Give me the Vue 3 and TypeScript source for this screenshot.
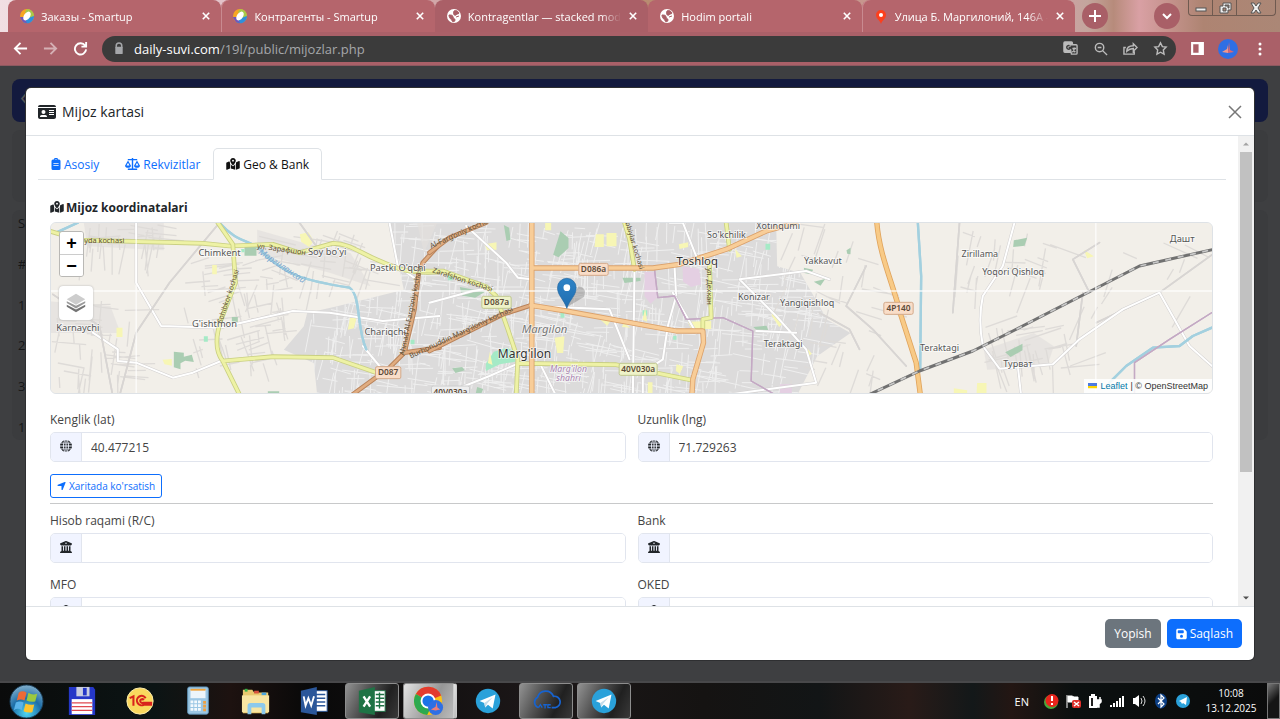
<script setup lang="ts">
import { ref } from 'vue'

interface BrowserTab { title: string; icon: 'smartup' | 'globe' | 'pin'; active?: boolean }
interface Shape { box: string; d: string }
interface Road { d: string; kind: string }
interface MapLabel { t: string; x: number; y: number; size: number; kind?: string; rot?: number }
interface Field { id: string; label: string; icon: string }

const browserTabs: BrowserTab[] = [
  { title: 'Заказы - Smartup', icon: 'smartup' },
  { title: 'Контрагенты - Smartup', icon: 'smartup' },
  { title: 'Kontragentlar — stacked modal', icon: 'globe', active: true },
  { title: 'Hodim portali', icon: 'globe' },
  { title: 'Улица Б. Маргилоний, 146А — Яндекс', icon: 'pin' },
]

const shapes: Record<string, Shape> = {
  card: { box: '0 0 576 512', d: 'M0 96l576 0c0-35.3-28.7-64-64-64L64 32C28.7 32 0 60.7 0 96zm0 32L0 416c0 35.3 28.7 64 64 64l448 0c35.3 0 64-28.7 64-64l0-288L0 128zM64 405.3c0-29.5 23.9-53.3 53.3-53.3l117.3 0c29.5 0 53.3 23.9 53.3 53.3c0 5.9-4.8 10.7-10.7 10.7L74.7 416c-5.9 0-10.7-4.8-10.7-10.7zM176 192a64 64 0 1 1 0 128 64 64 0 1 1 0-128zM352 192h160v32H352zM352 256h160v32H352zM352 320h160v32H352z' },
  clipboard: { box: '0 0 384 512', d: 'M112 64a80 80 0 0 1 160 0h48a64 64 0 0 1 64 64v320a64 64 0 0 1-64 64H64a64 64 0 0 1-64-64V128a64 64 0 0 1 64-64zM192 40a24 24 0 1 0 0 48 24 24 0 1 0 0-48zM80 220v36h224v-36zM80 310v36h224v-36z' },
  scale: { box: '0 0 640 512', d: 'M290 0h60v40h170v56H350v352h170v64H120v-64h170V96H120V40h170zM128 110L256 330c0 56-58 86-128 86S0 386 0 330zM128 205L66 320h124zM512 110l128 220c0 56-58 86-128 86s-128-30-128-86zM512 205l-62 115h124z' },
  map: { box: '0 0 576 512', d: 'M408 120c0 54.6-73.1 151.9-105.2 192c-7.7 9.6-22 9.6-29.6 0C241.1 271.9 168 174.6 168 120C168 53.7 221.7 0 288 0s120 53.7 120 120zm8 80.4c3.5-6.9 6.7-13.8 9.6-20.6c.5-1.2 1-2.5 1.5-3.7l116-46.4C558.9 123.4 576 135 576 152l0 270.8c0 9.8-6 18.6-15.1 22.3L416 503l0-302.6zM137.6 138.3c2.4 14.1 7.2 28.3 12.8 41.5c2.9 6.8 6.1 13.7 9.6 20.6l0 251.4L32.9 502.7C17.1 509 0 497.4 0 480.4L0 209.6c0-9.8 6-18.6 15.1-22.3l122.6-49zM327.8 332c13.9-17.4 35.7-45.7 56.2-77l0 249.3L192 449.4 192 255c20.5 31.3 42.3 59.6 56.2 77c20.5 25.6 59.1 25.6 79.6 0zM288 152a40 40 0 1 0 0-80 40 40 0 1 0 0 80z' },
  globe: { box: '0 0 512 512', d: 'M0 236a256 256 0 0 1 22-84h118a700 700 0 0 0-8 84zM0 276h132a700 700 0 0 0 8 84H22A256 256 0 0 1 0 276zM46 116A256 256 0 0 1 186 10a290 290 0 0 0-38 106zM46 396h102a290 290 0 0 0 38 106A256 256 0 0 1 46 396zM236 0v116h-52C196 50 214 8 236 0zM276 0v116h52C316 50 298 8 276 0zM180 152h56v84h-64a640 640 0 0 1 8-84zM276 152h56a640 640 0 0 1 8 84h-64zM172 276h64v84h-56a640 640 0 0 1-8-84zM276 276h64a640 640 0 0 1-8 84h-56zM184 396h52v116c-22-8-40-50-52-116zM276 396h52c-12 66-30 108-52 116zM326 10a256 256 0 0 1 140 106H364A290 290 0 0 0 326 10zM490 152a256 256 0 0 1 22 84H380a700 700 0 0 0-8-84zM512 276a256 256 0 0 1-22 84H372a700 700 0 0 0 8-84zM466 396a256 256 0 0 1-140 106 290 290 0 0 0 38-106z' },
  bank: { box: '0 0 512 512', d: 'M243.4 2.6l-224 96c-14 6-21.8 21-18.7 35.8S16.8 160 32 160l0 8c0 13.3 10.7 24 24 24l400 0c13.3 0 24-10.7 24-24l0-8c15.2 0 28.3-10.7 31.3-25.6s-4.8-29.9-18.7-35.8l-224-96c-8-3.4-17.2-3.4-25.2 0zM128 224l-64 0 0 196.3c-.6 .3-1.2 .7-1.8 1.1l-48 32c-11.7 7.8-17 22.4-12.9 35.9S17.9 512 32 512l448 0c14.1 0 26.5-9.2 30.6-22.7s-1.1-28.1-12.9-35.9l-48-32c-.6-.4-1.2-.7-1.8-1.1L448 224l-64 0 0 192-40 0 0-192-64 0 0 192-48 0 0-192-64 0 0 192-40 0 0-192zM256 64a32 32 0 1 1 0 64 32 32 0 1 1 0-64z' },
  arrow: { box: '0 0 448 512', d: 'M429.6 92.1c4.9-11.9 2.1-25.6-7-34.7s-22.8-11.9-34.7-7l-352 144c-14.2 5.8-22.2 20.8-19.3 35.8s16.1 25.8 31.4 25.8l176 0 0 176c0 15.3 10.8 28.4 25.8 31.4s30-5.1 35.8-19.3l144-352z' },
  save: { box: '0 0 448 512', d: 'M64 32C28.7 32 0 60.7 0 96L0 416c0 35.3 28.7 64 64 64l320 0c35.3 0 64-28.7 64-64l0-242.7c0-17-6.7-33.3-18.7-45.3L352 50.7C340 38.7 323.7 32 306.7 32L64 32zm0 96c0-17.7 14.3-32 32-32l192 0c17.7 0 32 14.3 32 32l0 64c0 17.7-14.3 32-32 32L96 224c-17.7 0-32-14.3-32-32l0-64zM224 288a64 64 0 1 1 0 128 64 64 0 1 1 0-128z' },
}

const cardTabs = [
  { name: 'Asosiy', icon: 'clipboard' },
  { name: 'Rekvizitlar', icon: 'scale' },
  { name: 'Geo & Bank', icon: 'map' },
]
const currentTab = ref('Geo & Bank')

const values = ref<Record<string, string>>({ lat: '40.477215', lng: '71.729263', account: '', bank: '', mfo: '', oked: '' })
const geoFields: Field[] = [
  { id: 'lat', label: 'Kenglik (lat)', icon: 'globe' },
  { id: 'lng', label: 'Uzunlik (lng)', icon: 'globe' },
]
const bankFields: Field[] = [
  { id: 'account', label: 'Hisob raqami (R/C)', icon: 'bank' },
  { id: 'bank', label: 'Bank', icon: 'bank' },
  { id: 'mfo', label: 'MFO', icon: 'bank' },
  { id: 'oked', label: 'OKED', icon: 'bank' },
]

const pageRows = ['Sa', '#', '1', '2', '3', '1']

/* Side streets of the city: short blocks on a slightly turned grid. */
let seed = 41
function rand(): number {
  seed = (seed * 16807) % 2147483647
  return seed / 2147483647
}
function streets(count: number, x0: number, x1: number, y0: number, y1: number, turn: number): string {
  let d = ''
  for (let i = 0; i < count; i++) {
    const x = Math.round(x0 + rand() * (x1 - x0))
    const y = Math.round(y0 + rand() * (y1 - y0))
    const angle = turn + (rand() - 0.5) * 0.35 + (rand() > 0.5 ? Math.PI / 2 : 0)
    const len = 30 + rand() * 90
    d += `M${x} ${y}l${Math.round(Math.cos(angle) * len)} ${Math.round(Math.sin(angle) * len)}`
  }
  return d
}
const cityStreets = streets(900, 780, 2340, -20, 516, 0.12)
const villageStreets =
  streets(70, 400, 700, 100, 440, -0.2) + streets(40, 0, 240, 230, 470, 0.05) + streets(45, 620, 960, 20, 190, 0.25) +
  streets(34, 90, 330, 0, 80, 0.05) + streets(26, 2720, 3000, 20, 200, 0.2) + streets(34, 2790, 3060, 300, 440, -0.2) +
  streets(40, 2200, 2480, 0, 480, 0.3) + streets(10, 3100, 3460, 20, 260, 0.4)

const westRoads: Road[] = [
  { d: 'M290 20V200L365 330L540 335L760 285L870 290L1030 315L1200 300', kind: 'white' },
  { d: 'M160 350L235 400L235 435L290 440L400 485L460 470L545 435', kind: 'white' },
  { d: 'M1050 20L1075 150L1130 190M970 390L1020 450', kind: 'white' },
  { d: 'M540 20L390 200L290 350L240 540M40 235L180 330L220 540M780 20L830 90', kind: 'lane' },
  { d: 'M540 20C600 90 640 65 680 120C740 170 770 190 930 215C965 240 950 330 980 400', kind: 'river' },
  { d: 'M50 50L115 20', kind: 'river' },
  { d: 'M30 45L120 72L490 82L570 90L700 85L780 110L880 82C930 82 960 110 1010 130C1060 150 1090 175 1200 168', kind: 'yellow' },
  { d: 'M535 20L580 85L588 200L545 310C525 370 530 410 550 435L602 540M550 435L700 422L880 425L1040 480', kind: 'yellow' },
  { d: 'M1200 85L1150 140L1138 170L1125 280L1095 410L1050 455L940 535M1095 410L1200 395', kind: 'brown' },
]
const cityRoads: Road[] = [
  { d: 'M110 30L230 140L265 185L305 190M0 260L130 225L190 215M305 270L540 280L600 430', kind: 'white' },
  { d: 'M615 160L610 540M720 20L760 20L800 120M735 150L740 240L715 330L700 430L640 470L640 540', kind: 'white' },
  { d: 'M865 540L1160 500L1130 400L1040 300L930 190L1130 165L1200 190M980 345L1100 350', kind: 'white' },
  { d: 'M730 230L800 350M330 440L380 540M30 540L180 480L260 445', kind: 'white' },
  { d: 'M620 160L675 160L685 245L735 240L770 310L880 305L970 345L965 495L1035 535', kind: 'border' },
  { d: 'M585 20L600 70L615 160M890 20L900 100M840 140L845 305L820 310L820 350', kind: 'yellow' },
  { d: 'M-50 165L40 165L170 212L200 240L235 340L265 430L260 540M265 442L560 446L785 492', kind: 'yellow' },
  { d: 'M0 110L60 65L170 20M0 405L110 350L220 295L305 268', kind: 'brown' },
  { d: 'M307 20V540M310 156H670L750 145L890 100L1010 45L1100 20M305 268L410 285L740 345H820L822 380L790 490L787 540', kind: 'orange' },
]
const eastRoads: Road[] = [
  { d: 'M140 150L80 270L160 340L260 450M0 290L90 340L120 400M400 290L420 20M790 230L770 390M840 80L760 130L810 230M1200 100L1020 230L830 320', kind: 'lane' },
  { d: 'M585 20L550 150L490 240Q475 310 490 390L540 458L700 445L780 370L910 280L1020 230L1110 390L1200 470M595 450L605 540', kind: 'white' },
  { d: 'M295 20L305 180L302 460', kind: 'river' },
  { d: 'M870 500L920 450L1000 395L1080 390L1120 360L1200 325', kind: 'river' },
  { d: 'M945 540V440L1050 370L1200 275', kind: 'border' },
  { d: 'M172 20C180 120 220 200 245 300L290 440L303 540', kind: 'trunk' },
  { d: 'M140 540L300 465L460 405L580 345L960 150L1200 96', kind: 'rail' },
]
const roadGroups = [
  { x: -33, roads: westRoads },
  { x: 1137, roads: cityRoads },
  { x: 2307, roads: eastRoads },
]

const labels: MapLabel[] = [
  { t: 'Chimkent', x: 507, y: 100, size: 28 },
  { t: "Soy bo'yi", x: 830, y: 95, size: 28 },
  { t: "Pastki O'qchi", x: 1042, y: 144, size: 28 },
  { t: 'Karnaychi', x: 82, y: 325, size: 28 },
  { t: "G'ishtmon", x: 492, y: 311, size: 28 },
  { t: 'Chariqchi', x: 1004, y: 337, size: 28 },
  { t: "So'kchilik", x: 2028, y: 46, size: 27 },
  { t: 'Xotinqumi', x: 2183, y: 19, size: 27 },
  { t: 'Toshloq', x: 1940, y: 126, size: 34, kind: 'town' },
  { t: 'Yakkavut', x: 2317, y: 124, size: 27 },
  { t: 'Konizar', x: 2110, y: 230, size: 27 },
  { t: 'Yangiqishloq', x: 2270, y: 250, size: 27 },
  { t: 'Teraktagi', x: 2198, y: 373, size: 27 },
  { t: 'Margilon', x: 1482, y: 329, size: 34, kind: 'district' },
  { t: "Marg'ilon", x: 1422, y: 405, size: 36, kind: 'town' },
  { t: "Marg'ilon", x: 1554, y: 446, size: 26, kind: 'admin' },
  { t: 'shahri', x: 1554, y: 475, size: 26, kind: 'admin' },
  { t: 'Zirillama', x: 2788, y: 103, size: 27 },
  { t: 'Yoqori Qishloq', x: 2888, y: 157, size: 27 },
  { t: 'Дашт', x: 3395, y: 57, size: 28 },
  { t: 'Teraktagi', x: 2667, y: 383, size: 27 },
  { t: 'Турват', x: 2902, y: 431, size: 27 },
  { t: 'Joyda kochasi', x: 152, y: 60, size: 22, kind: 'street' },
  { t: 'ул. Зарафшон', x: 692, y: 86, size: 22, kind: 'street', rot: 8 },
  { t: 'Sohibkor kochasi', x: 540, y: 222, size: 21, kind: 'street', rot: -72 },
  { t: 'Маргилансай', x: 690, y: 136, size: 26, kind: 'water', rot: 34 },
  { t: 'Ahmad Al-Farg‘oniy kochasi', x: 1087, y: 266, size: 21, kind: 'street', rot: -79 },
  { t: 'Al-Farg‘oniy kochasi', x: 1235, y: 35, size: 22, kind: 'street', rot: -24 },
  { t: 'Zarafshon kochasi', x: 1234, y: 177, size: 22, kind: 'street', rot: 18 },
  { t: 'Burhonuddin Marg‘iloniy kochasi', x: 1235, y: 335, size: 22, kind: 'street', rot: -25 },
  { t: 'Murabbiylar kochasi', x: 1738, y: 45, size: 21, kind: 'street', rot: 73 },
  { t: 'ул. Дехкан', x: 1969, y: 190, size: 22, kind: 'street', rot: 90 },
]
const shields = [
  { t: 'D087', x: 1013, y: 448, tone: 'warm' },
  { t: 'D086a', x: 1629, y: 138, tone: 'warm' },
  { t: 'D087a', x: 1338, y: 237, tone: 'lime' },
  { t: '40V030a', x: 1763, y: 438, tone: 'lime' },
  { t: '40V030a', x: 1200, y: 506, tone: 'plain' },
  { t: '4P140', x: 2544, y: 255, tone: 'warm' },
]
const parks = 'M582 68h36v30h-36zM370 386l30 3 0 12 24-6 6 22-26-4-14 8v18l-20-6zM544 282h18v18h-18zM652 505h34v12h-34zM1360 6l16 8 4 36-12 4zM1530 25l24 20v30l-30 28-16-8zM1228 192l76 14-30 18-40-6zM1716 164h54v10l-48 6zM2108 312l40-4 8 20-34-4zM2260 134l28 6-8 14-18-4zM2290 176l34-8-14 20zM2388 82l12-8v20l-10-2zM2890 52l40-8-8 24-34 4zM2864 388l52-26v20l-36 20zM1205 436l30-4 8 10-28 8zM1280 492l18 6-8 20-14-8z'
const mints = 'M1330 386l40-12 24 12v30l-46 8-42 20v-22zM460 340h12v16h-12zM1776 262h14v16h-14zM2145 62h14v18h-14zM572 78h10v10h-10zM1530 260h12v24h-12zM1192 150h14v22h-14zM1080 350h12v14h-12zM1868 338h10v12h-10z'
const yards = 'M485 126h14v28h-14zM748 34l26-6 16 26-14 18-24-16zM898 284l20 2-8 30-18 4zM198 314h18v28h-18zM336 410l28-2v20l-22-4zM1636 34h24v38h-28zM1668 30h30v40h-30zM1302 64l36-6v22l-28 2zM1484 0h18v22h-18zM1512 344l30-4-4 50h-18zM1784 256l6 40-14-6zM1318 386l8 40-14-6zM1885 64l28-6v14l-26 6zM2054 78l20 22-16 4zM1650 290l30 4-10 14zM1720 300l20 14-26-2zM1912 296l70-2v24h-60zM2164 266l30 38-8 8-22-34zM1792 478h14v34h-14zM1878 424l20 6-10 22-12-8zM2270 376l14 16-10 8zM2780 480h28v32h-30zM2710 496l40 6v10h-40zM3100 80l30 20-20 6z'
const pinks = 'M1782 146h32l8 76-22 20-18-22zM1896 130l50 8 6 46-30 8-24-16zM2188 484h36v32h-36z'

const tray = ['alert', 'flag', 'power', 'signal', 'sound', 'bluetooth', 'telegram']
const apps = ['start', 'floppy', 'onec', 'calc', 'folder', 'word', 'excel', 'chrome', 'telegram', 'cloud', 'telegram']
const running = [6, 7, 9, 10]
</script>

<template>
  <div class="screen">
    <header class="strip">
      <div class="tabs">
        <div v-for="tab in browserTabs" :key="tab.title" class="tab" :class="{ active: tab.active }">
          <svg v-if="tab.icon === 'smartup'" class="fav" viewBox="0 0 16 16">
            <circle cx="8" cy="8" r="7" fill="#f6a623" /><path d="M8 1a7 7 0 0 1 7 7l-3 4-6-8z" fill="#a7c94a" />
            <path d="M15 8a7 7 0 0 1-11 6l5-4z" fill="#2f8fdc" /><path d="M1 9a7 7 0 0 0 7 6l-3-6z" fill="#7357b8" />
            <ellipse cx="8" cy="8" rx="3" ry="5" transform="rotate(35 8 8)" fill="#fff" />
          </svg>
          <svg v-else-if="tab.icon === 'globe'" class="fav" viewBox="0 0 16 16">
            <circle cx="8" cy="8" r="7" fill="#fff" />
            <path d="M3 7c2 0 4 0 4 2s2 1 2 3-2 2-3 1c0-2-3-2-3-6zM8 3c2-1 4 0 5 2-1 2-2 0-3 2-2 1-3-1-2-4zM10 9l3-1" fill="#a85e66" stroke="#a85e66" />
          </svg>
          <svg v-else class="fav" viewBox="0 0 16 16">
            <path d="M8 2a5 5 0 0 1 5 5c0 4-4 5-5 9-1-4-5-5-5-9a5 5 0 0 1 5-5z" fill="#fc3f1d" /><circle cx="8" cy="7" r="2" fill="#fff" />
          </svg>
          <span class="title">{{ tab.title }}</span>
          <button class="x" type="button" aria-label="Close tab">
            <svg viewBox="0 0 10 10"><path d="M1 1l8 8M9 1l-8 8" /></svg>
          </button>
        </div>
      </div>
      <button class="round" type="button" aria-label="New tab"><svg viewBox="0 0 14 14"><path d="M7 1v12M1 7h12" /></svg></button>
      <div class="gap"></div>
      <button class="round" type="button" aria-label="Search tabs"><svg viewBox="0 0 14 14"><path d="M3 5l4 4 4-4" /></svg></button>
      <div class="winbtns">
        <button type="button" aria-label="Minimize"><svg viewBox="0 0 14 12"><rect x="2" y="6" width="10" height="3" /></svg></button>
        <button type="button" aria-label="Restore"><svg viewBox="0 0 14 12"><path d="M5 1h8v7h-3v3H2V4h3zM5 6v3h3V6zM7 3v1h3v2h1V3z" fill-rule="evenodd" /></svg></button>
        <button class="wide" type="button" aria-label="Close"><svg viewBox="0 0 14 12"><path d="M2 1h3l2 3 2-3h3L9 6l3 5H9L7 8l-2 3H2l3-5z" /></svg></button>
      </div>
    </header>

    <div class="toolbar">
      <button class="nav" type="button" aria-label="Back"><svg viewBox="0 0 16 16"><path d="M15 8H2M8 2L2 8l6 6" /></svg></button>
      <button class="nav dim" type="button" aria-label="Forward"><svg viewBox="0 0 16 16"><path d="M1 8h13M8 2l6 6-6 6" /></svg></button>
      <button class="nav" type="button" aria-label="Reload"><svg viewBox="0 0 16 16"><path d="M13 5a6 6 0 1 0 1 4M14 1v5H9" /></svg></button>
      <div class="address">
        <svg class="lock" viewBox="0 0 10 14"><path d="M2 6V4a3 3 0 0 1 6 0v2" fill="none" stroke="#a5a7aa" stroke-width="1.6" /><rect x="1" y="5" width="8" height="8" rx="1" fill="#a5a7aa" /></svg>
        <span class="url" role="textbox" aria-label="Address" contenteditable="true"><b>daily-suvi.com</b>/19l/public/mijozlar.php</span>
        <button type="button" aria-label="Translate"><svg viewBox="0 0 16 16"><rect x="1" y="1" width="9" height="11" rx="1" fill="#bbb" /><path d="M7 4h7a1 1 0 0 1 1 1v8a1 1 0 0 1-1 1H9z" fill="#3b3b3b" stroke="#bbb" /><path d="M10 8h4M12 7v1c0 2-1 3-2 4M11 9l2 3" stroke="#bbb" fill="none" /><path d="M7 5a2 2 0 1 0 1 2H6" stroke="#3b3b3b" fill="none" /></svg></button>
        <button type="button" aria-label="Zoom"><svg viewBox="0 0 16 16"><circle cx="7" cy="7" r="4.5" /><path d="M10 10l5 5M5 7h4" /></svg></button>
        <button type="button" aria-label="Share"><svg viewBox="0 0 16 16"><path d="M3 7H1v7h11v-3M4 11c0-4 3-6 7-6V3l4 4-4 4V8c-3 0-5 1-7 3z" /></svg></button>
        <button type="button" aria-label="Bookmark"><svg viewBox="0 0 16 16"><path d="M8 2l2 4 4 .5-3 3 .8 4.500L8 12l-3.800 2L5 9.500l-3-3L6 6z" /></svg></button>
      </div>
      <button class="side" type="button" aria-label="Side panel"><svg viewBox="0 0 14 14"><path d="M1 1h12v12H1zM3 3v8h5V3z" fill="#fff" fill-rule="evenodd" /></svg></button>
      <button class="avatar" type="button" aria-label="Profile"><svg viewBox="0 0 20 20"><circle cx="10" cy="10" r="10" fill="#2f6fe4" /><path d="M11 3l1 8 4 2-6 1z" fill="#e0666f" /><path d="M10 6v8l-6-1 5-3z" fill="#f4978a" /></svg></button>
      <button class="dots" type="button" aria-label="Menu"><svg viewBox="0 0 4 16"><circle cx="2" cy="3" r="1.500" /><circle cx="2" cy="8" r="1.500" /><circle cx="2" cy="13" r="1.500" /></svg></button>
    </div>

    <main class="page">
      <div class="sitebar"><span>‹</span></div>
      <div class="behind">
        <div class="block"></div>
        <div class="block list">
          <span v-for="(r, i) in pageRows" :key="i">{{ r }}</span>
        </div>
      </div>

      <div class="overlay">
        <section class="modal" role="dialog" aria-labelledby="modal-title">
          <header class="mhead">
            <svg class="ic big" :viewBox="shapes.card.box"><path :d="shapes.card.d" fill-rule="evenodd" /></svg>
            <h1 id="modal-title">Mijoz kartasi</h1>
            <button class="close" type="button" aria-label="Yopish"><svg viewBox="0 0 14 14"><path d="M1 1l12 12M13 1L1 13" /></svg></button>
          </header>

          <div class="mbody">
            <div class="content">
              <div class="navtabs" role="tablist">
                <button v-for="t in cardTabs" :key="t.name" type="button" role="tab" :aria-selected="t.name === currentTab" :class="{ on: t.name === currentTab }" @click="currentTab = t.name">
                  <svg class="ic" :class="t.icon" :viewBox="shapes[t.icon].box"><path :d="shapes[t.icon].d" fill-rule="evenodd" /></svg>{{ t.name }}
                </button>
              </div>

              <div class="pane">
                <h2><svg class="ic map" :viewBox="shapes.map.box"><path :d="shapes.map.d" fill-rule="evenodd" /></svg>Mijoz koordinatalari</h2>

                <div class="mapbox">
                  <svg class="mapart" viewBox="0 0 3486 510" preserveAspectRatio="xMidYMid slice">
                    <defs>
                      <clipPath id="city"><path d="M1017 0L1045 130L1060 200L860 250L770 270L760 310L700 380L790 420L800 516H2240L2300 400L2400 330L2330 290L2250 150L2180 130L2177 0z" /></clipPath>
                      <linearGradient id="pinfill" x1="0" y1="0" x2="0" y2="1"><stop offset="0" stop-color="#2e83c6" /><stop offset="1" stop-color="#1f6db0" /></linearGradient>
                    </defs>
                    <rect width="3486" height="516" fill="#f2efe9" />
                    <g clip-path="url(#city)"><rect width="3486" height="516" fill="#dcdbdb" /><path :d="cityStreets" class="alley" /></g>
                    <path d="M100 0H340V82L110 70zM620 20L760 60L900 90L960 190L840 150L620 90zM0 235L180 250L210 330L0 330zM2800 380l150-50 60 40-20 60-180 10zM1160 0l-60 0 20 90z" fill="#e2e0dd" opacity=".7" />
                    <path :d="villageStreets" class="track" />
                    <path :d="parks" fill="#aacdb2" /><path :d="mints" fill="#a5eac6" /><path :d="yards" fill="#f7f6b5" /><path :d="pinks" fill="#e4cfe2" />
                    <g v-for="g in roadGroups" :key="g.x" :transform="`translate(${g.x} -21)`">
                      <template v-for="(r, i) in g.roads" :key="i">
                        <path :d="r.d" class="road casing" :class="r.kind" />
                        <path :d="r.d" class="road fill" :class="r.kind" />
                      </template>
                    </g>
                    <path d="M257 0V516M3136 0V516M0 204H3486" stroke="#fff" stroke-width="4" opacity=".8" />
                    <text v-for="l in labels" :key="l.t + l.x" :x="l.x" :y="l.y" class="place" :class="l.kind" :font-size="l.size" :transform="l.rot ? `rotate(${l.rot} ${l.x} ${l.y})` : undefined">{{ l.t }}</text>
                    <g v-for="s in shields" :key="s.t + s.x" class="shield" :class="s.tone">
                      <rect :x="s.x - (s.t.length > 5 ? 57 : s.t.length > 4 ? 44 : 38)" :y="s.y - 17" :width="s.t.length > 5 ? 114 : s.t.length > 4 ? 88 : 76" height="36" rx="5" />
                      <text :x="s.x" :y="s.y + 9" font-size="25">{{ s.t }}</text>
                    </g>
                    <path d="M1550 252L1600 222Q1612 195 1584 190z" fill="#777" opacity=".4" />
                    <path d="M1549 256C1540 228 1521 218 1521 194a28 28 0 0 1 56 0C1577 218 1558 228 1549 256z" fill="url(#pinfill)" stroke="#2467a0" stroke-width="2" />
                    <circle cx="1549" cy="194" r="10" fill="#fff" />
                  </svg>
                  <div class="zoom"><button type="button" aria-label="Zoom in">+</button><button type="button" aria-label="Zoom out">−</button></div>
                  <button class="layers" type="button" aria-label="Layers">
                    <svg viewBox="0 0 26 26"><path d="M3 17l10 6 10-6v-2l-10 5-10-5z" fill="#747474" /><path d="M3 13l10 6 10-6v-2l-10 5-10-5z" fill="#9a9a9a" /><path d="M13 3l10 6-10 6L3 9z" fill="#cdcdcd" /></svg>
                  </button>
                  <div class="attr">
                    <svg viewBox="0 0 12 8"><path fill="#4c7be1" d="M0 0h12v4H0z" /><path fill="#ffd500" d="M0 4h12v3H0z" /></svg>
                    <a href="#">Leaflet</a> | © OpenStreetMap
                  </div>
                </div>

                <div class="grid">
                  <div v-for="f in geoFields" :key="f.id" class="field">
                    <label :for="f.id">{{ f.label }}</label>
                    <div class="group">
                      <span class="addon"><svg class="ic sq" :viewBox="shapes[f.icon].box"><path :d="shapes[f.icon].d" fill-rule="evenodd" /></svg></span>
                      <input :id="f.id" v-model="values[f.id]" type="text" />
                    </div>
                  </div>
                </div>
                <button class="show" type="button"><svg class="ic" :viewBox="shapes.arrow.box"><path :d="shapes.arrow.d" /></svg>Xaritada ko'rsatish</button>
                <hr />
                <div class="grid bank">
                  <div v-for="f in bankFields" :key="f.id" class="field">
                    <label :for="f.id">{{ f.label }}</label>
                    <div class="group">
                      <span class="addon"><svg class="ic sq" :viewBox="shapes[f.icon].box"><path :d="shapes[f.icon].d" fill-rule="evenodd" /></svg></span>
                      <input :id="f.id" v-model="values[f.id]" type="text" />
                    </div>
                  </div>
                </div>
              </div>
            </div>
            <div class="scroll" aria-hidden="true">
              <svg viewBox="0 0 16 16"><path d="M4 10l4-4 4 4z" fill="#a3a3a3" /></svg>
              <div class="thumb"></div><div class="rest"></div>
              <svg viewBox="0 0 16 16"><path d="M4 6l4 4 4-4z" fill="#505050" /></svg>
            </div>
          </div>

          <footer class="mfoot">
            <button class="btn grey" type="button">Yopish</button>
            <button class="btn blue" type="button"><svg class="ic" :viewBox="shapes.save.box"><path :d="shapes.save.d" fill-rule="evenodd" /></svg>Saqlash</button>
          </footer>
        </section>
      </div>
    </main>

    <footer class="taskbar">
      <button v-for="(a, i) in apps" :key="i" class="app" :class="[a, { run: running.includes(i) }]" type="button" :aria-label="a">
        <svg v-if="a === 'start'" viewBox="0 0 36 36">
          <defs><radialGradient id="orb" cx=".5" cy=".85" r=".9"><stop offset="0" stop-color="#4fd8f5" /><stop offset=".5" stop-color="#1d6ea8" /><stop offset="1" stop-color="#8fb7d0" /></radialGradient></defs>
          <circle cx="18" cy="18" r="17" fill="url(#orb)" stroke="#1b3e58" />
          <path d="M10 9q4-3 8 0l-2 8q-4-2-8 0z" fill="#ee6a35" /><path d="M20 9q4 3 9 1l-2 8q-5 1-9-1z" fill="#9cc93f" /><path d="M7 19q4-2 8 0l-2 8q-4-3-8 0z" fill="#5ab3ea" /><path d="M17 20q4 2 9 1l-2 8q-5 1-9-1z" fill="#fdc42e" />
        </svg>
        <svg v-else-if="a === 'floppy'" viewBox="0 0 32 32"><path d="M2 1h26l2 3v27H2z" fill="#2537c8" /><rect x="10" y="1" width="14" height="10" fill="#c9cde0" /><rect x="17" y="2" width="4" height="8" fill="#2537c8" /><rect x="5" y="14" width="22" height="16" fill="#fff" /><path d="M5 18h22M5 22h22M5 26h22" stroke="#e04a50" stroke-width="1.500" /></svg>
        <svg v-else-if="a === 'onec'" viewBox="0 0 32 32"><circle cx="16" cy="16" r="14" fill="#f9d85e" stroke="#fff0b0" /><path d="M5 13l4-2v10M22 13a5 5 0 1 0-2 7h9M20 15a2 2 0 1 0-1 3h10" fill="none" stroke="#d8231c" stroke-width="2.200" /></svg>
        <svg v-else-if="a === 'calc'" viewBox="0 0 32 32"><rect x="5" y="1" width="22" height="29" rx="2" fill="#9cc7e4" stroke="#5f93b8" /><rect x="8" y="4" width="16" height="9" fill="#edf5fa" /><path d="M8 4h16" stroke="#f1a43c" stroke-width="2" /><path d="M8 17h12M8 21h12M8 25h12" stroke="#f3f9fd" stroke-width="3" stroke-dasharray="3 1" /><path d="M23 16v11" stroke="#f0a040" stroke-width="3" stroke-dasharray="3 1" /></svg>
        <svg v-else-if="a === 'folder'" viewBox="0 0 32 32"><path d="M2 4h10l2 3h15v22H2z" fill="#e9c96f" /><path d="M4 3h3v3H4z" fill="#36b24a" /><path d="M14 5h5v3h-5z" fill="#d8533e" /><path d="M22 7h5v3h-5z" fill="#4aa5de" /><path d="M1 10h29v18H1z" fill="#f8e5a2" /><path d="M7 30V21q0-3 3-3h13q3 0 3 3v9h-4v-7H11v7z" fill="#8cc9ec" /></svg>
        <svg v-else-if="a === 'word'" viewBox="0 0 32 32"><rect x="14" y="5" width="16" height="22" fill="#fff" stroke="#2b579a" /><path d="M18 9h10M18 13h10M18 17h10M18 21h10" stroke="#2b579a" stroke-width="1.500" /><path d="M2 5l17-4v30L2 28z" fill="#2b579a" /><path d="M5 11l2 10 3-8 3 8 3-10" fill="none" stroke="#fff" stroke-width="2" /></svg>
        <svg v-else-if="a === 'excel'" viewBox="0 0 32 32"><rect x="14" y="5" width="16" height="22" fill="#fff" stroke="#1f7345" /><path d="M20 9h9M20 13h9M20 17h9M20 21h9M24 7v17" stroke="#1f7345" stroke-width="1.500" /><path d="M2 5l17-4v30L2 28z" fill="#1f7345" /><path d="M7 11l7 11M14 11L7 22" fill="none" stroke="#fff" stroke-width="2.500" /></svg>
        <svg v-else-if="a === 'chrome'" viewBox="0 0 32 32"><circle cx="15" cy="16" r="15" fill="#fbc116" /><path d="M15 16L2 8.500A15 15 0 0 1 29 10z" fill="#e33b2e" /><path d="M2 8.500A15 15 0 0 0 14 31l5-10-4-5z" fill="#2da94f" /><circle cx="15" cy="16" r="8" fill="#fff" /><circle cx="15" cy="16" r="6" fill="#1a73e8" /><circle cx="23" cy="23" r="8" fill="#2f6fe4" /><path d="M24 17l1 6 3 2-5 1-5-1 5-3z" fill="#ef7d77" /></svg>
        <svg v-else-if="a === 'cloud'" viewBox="0 0 32 32"><path d="M8 23a6 6 0 0 1-1-11 9 9 0 0 1 17-1 6 6 0 0 1 2 12h-4" fill="none" stroke="#1663d0" stroke-width="1.800" /><path d="M8 23l2-3 2 3M13 20h4M15 20v4M21 20h-3v3h3" fill="none" stroke="#1663d0" stroke-width="1.400" /></svg>
        <svg v-else viewBox="0 0 32 32"><circle cx="16" cy="16" r="13" fill="#2aa1da" /><path d="M7 16l17-7-3 15-5-4-3 3-1-5z" fill="#fff" /><path d="M12 18l9-6-6 7-2 4z" fill="#c5dcea" /></svg>
      </button>
      <div class="gap"></div>
      <span class="lang">EN</span>
      <div class="tray">
        <button v-for="t in tray" :key="t" type="button" :aria-label="t">
          <svg v-if="t === 'alert'" viewBox="0 0 16 16"><circle cx="8" cy="9" r="7" fill="#4aa83c" /><circle cx="9" cy="7.500" r="6.500" fill="#e8241c" /><path d="M9 3v5M9 10v2" stroke="#fff" stroke-width="2" /></svg>
          <svg v-else-if="t === 'flag'" viewBox="0 0 16 16"><path d="M2 2v13M3 3h4l2 1h4v6H8L7 9H3z" fill="#fff" stroke="#fff" /><rect x="7" y="7" width="9" height="8" rx="2" fill="#df2f2a" /><path d="M9 9l5 4M14 9l-5 4" stroke="#fff" stroke-width="1.500" /></svg>
          <svg v-else-if="t === 'power'" viewBox="0 0 16 16"><path d="M2 3h8v12H2zM4 1h4v2H4z" fill="#fff" /><path d="M4 5h2v8H4z" fill="#222" /><path d="M9 4v3M13 4v3M8 7h6v2l-2 2v3H9" fill="#fff" stroke="#fff" stroke-width="1.500" /></svg>
          <svg v-else-if="t === 'signal'" viewBox="0 0 16 16"><path d="M2 12v2M5 10v4M8 8v6M11 5v9M14 3v11" stroke="#fff" stroke-width="2" /></svg>
          <svg v-else-if="t === 'sound'" viewBox="0 0 16 16"><path d="M2 5h2l4-3v12l-4-3H2z" fill="#fff" /><path d="M10 5q2 3 0 6M12 3q4 5 0 10" fill="none" stroke="#ddd" /></svg>
          <svg v-else-if="t === 'bluetooth'" viewBox="0 0 16 16"><ellipse cx="8" cy="8" rx="6" ry="7.500" fill="#0c3f85" /><path d="M5 5l6 6-3 3V2l3 3-6 6" fill="none" stroke="#fff" stroke-width="1.200" /></svg>
          <svg v-else viewBox="0 0 16 16"><circle cx="8" cy="8" r="7" fill="#2aa1da" /><path d="M4 8l8-4-1 8-3-2-1 1-1-2z" fill="#fff" /></svg>
        </button>
      </div>
      <div class="clock"><span>10:08</span><span>13.12.2025</span></div>
      <button class="desktop" type="button" aria-label="Show desktop"></button>
    </footer>
  </div>
</template>

<style>
body { margin: 0; overflow: hidden; }
</style>

<style scoped>
* { box-sizing: border-box; }
.screen { height: 100vh; display: flex; flex-direction: column; font-family: "Open Sans", "Noto Sans", sans-serif; font-size: 12px; color: #212529; }
button { font: inherit; color: inherit; background: none; border: 0; padding: 0; margin: 0; display: flex; align-items: center; justify-content: center; }
svg { display: block; flex: none; }
.gap { flex: 1; }

.strip { height: 32px; flex: none; display: flex; padding-left: 8px; background: linear-gradient(90deg, #f1dfe3 0, #d8aeb6 30%, #b88b70 50%, #d3a0a6 82%, #c3a59d 85%, #b78b7b 87%, #d9a0a4 89%, #ae8472 94%, #ab8776 100%); }
.tabs { display: flex; flex: 0 1 1067px; min-width: 0; }
.tab { flex: 1; min-width: 0; display: flex; align-items: center; padding: 0 9px 0 11px; background: #b5656c; color: #fff; border-radius: 8px 8px 0 0; }
.tab + .tab { box-shadow: inset 1px 0 0 #c98a90; }
.tab.active, .tab.active + .tab { box-shadow: none; }
.tab.active { background: #aa5f67; }
.fav { width: 16px; height: 16px; margin-right: 6px; }
.title { flex: 1; min-width: 0; font-size: 11px; white-space: nowrap; overflow: hidden; mask-image: linear-gradient(90deg, #000 calc(100% - 20px), transparent); }
.x { width: 12px; height: 12px; margin-left: 6px; }
.x svg { width: 8px; height: 8px; fill: none; stroke: #fff; stroke-width: 2; }
.round { width: 26px; height: 26px; margin: 3px 7px; border-radius: 50%; background: #a95f67; flex: none; }
.round svg { width: 14px; height: 14px; fill: none; stroke: #fff; stroke-width: 2; }
.winbtns { display: flex; height: 16px; margin: 0 4px 0 1px; border: 1px solid #6f5a50; border-top: 0; border-radius: 0 0 4px 4px; }
.winbtns button { width: 24px; border-right: 1px solid #6f5a50; }
.winbtns .wide { width: 38px; border-right: 0; }
.winbtns svg { width: 14px; height: 12px; fill: #eee; stroke: #555; stroke-width: 1; }

.toolbar { height: 34px; flex: none; display: flex; align-items: center; padding: 0 12px; background: #aa6068; border-bottom: 1px solid #8d5960; }
.nav { width: 16px; height: 16px; margin-right: 14px; }
.nav svg { width: 15px; height: 15px; fill: none; stroke: #fff; stroke-width: 2; }
.nav.dim { opacity: .5; }
.address { flex: 1; min-width: 0; display: flex; align-items: center; height: 26px; margin: 0 14px 0 0; padding: 0 8px 0 12px; border-radius: 13px; background: #3b3b3b; }
.lock { width: 10px; height: 13px; }
.url { flex: 1; margin-left: 10px; color: #a5a7aa; font-size: 13px; white-space: nowrap; overflow: hidden; outline: 0; }
.url b { color: #fff; font-weight: 400; }
.address button { width: 16px; margin-left: 14px; }
.address button svg { width: 15px; height: 15px; fill: none; stroke: #bbb; stroke-width: 1.5; }
.side svg { width: 15px; height: 15px; }
.avatar { margin: 0 20px 0 13px; }
.avatar svg { width: 20px; height: 20px; }
.dots { margin-right: 6px; }
.dots svg { width: 4px; height: 16px; fill: #fff; }

.page { flex: 1; min-height: 0; position: relative; background: #3e3f41; padding: 13px 12px 0; overflow: hidden; }
.sitebar { height: 43px; border-radius: 8px; background: #131a3e; color: #555; padding-left: 8px; font-size: 24px; line-height: 34px; }
.behind .block { height: 72px; margin-top: 8px; border-radius: 8px; background: #3b3c3e; }
.behind .list { height: 230px; padding: 4px 6px; display: flex; flex-direction: column; justify-content: space-between; font-size: 13px; color: #151617; }
.overlay { position: absolute; inset: 0; display: flex; padding: 22px 26px 21px; }
.modal { flex: 1; min-width: 0; display: flex; flex-direction: column; background: #fff; border-radius: 5px; box-shadow: 0 0 0 1px #2e2f31; overflow: hidden; }
.mhead { height: 48px; flex: none; display: flex; align-items: center; padding: 0 12px; border-bottom: 1px solid #dee2e6; }
h1 { flex: 1; margin: 0 0 0 6px; font-size: 14px; font-weight: 400; }
.ic { width: 12px; height: 12px; fill: currentColor; }
.ic.big { width: 18px; height: 16px; }
.ic.map { width: 14px; height: 12px; }
.ic.scale { width: 15px; height: 12px; }
.ic.clipboard { width: 10px; height: 12px; }
.close svg { width: 14px; height: 14px; fill: none; stroke: #777; stroke-width: 1.5; }
.mbody { flex: 1; min-height: 0; display: flex; }
.content { flex: 1; min-width: 0; padding: 12px 12px 0; overflow: hidden; }
.navtabs { display: flex; height: 32px; border-bottom: 1px solid #dee2e6; }
.navtabs button { height: 32px; padding: 0 12px; gap: 3px; border: 1px solid transparent; border-radius: 5px 5px 0 0; color: #0d6efd; }
.navtabs .on { color: #111; background: #fff; border-color: #dee2e6 #dee2e6 #fff; }
.pane { padding: 16px 13px 0 12px; }
h2 { display: flex; align-items: center; gap: 2px; margin: 0 0 4px; height: 22px; font-size: 12px; font-weight: 700; }
.mapbox { position: relative; height: 172px; border: 1px solid #dee2e6; border-radius: 6px; overflow: hidden; background: #f2efe9; }
.mapart { width: 100%; height: 100%; }
.alley { fill: none; stroke: #efefef; stroke-width: 3; }
.track { fill: none; stroke: #dedbd8; stroke-width: 4; }
.road { fill: none; stroke-linejoin: round; stroke-linecap: round; }
.casing.white { stroke: #d2d0d0; stroke-width: 9; } .fill.white { stroke: #fff; stroke-width: 6; }
.road.lane { stroke: #d8d5d3; stroke-width: 5; }
.road.river { stroke: #a3d0df; stroke-width: 7; }
.casing.yellow { stroke: #c9cf82; stroke-width: 14; } .fill.yellow { stroke: #eef2a5; stroke-width: 9; }
.casing.brown { stroke: #b9835b; stroke-width: 14; } .fill.brown { stroke: #e0ac80; stroke-width: 8; }
.casing.orange { stroke: #dba16b; stroke-width: 16; } .fill.orange { stroke: #f8cd98; stroke-width: 11; }
.casing.trunk { stroke: #e0a45d; stroke-width: 16; } .fill.trunk { stroke: #f8ca86; stroke-width: 11; }
.road.border { stroke: #c4a9c4; stroke-width: 4; }
.casing.rail { stroke: #717171; stroke-width: 9; } .fill.rail { stroke: #c9c9c9; stroke-width: 5; stroke-dasharray: 18 20; stroke-linecap: butt; }
.place { font-family: "Noto Sans", sans-serif; fill: #555; text-anchor: middle; dominant-baseline: alphabetic; paint-order: stroke; stroke: rgba(255, 255, 255, .7); stroke-width: 5px; }
.place.town { fill: #333; }
.place.district { fill: #777; font-style: italic; }
.place.admin { fill: #a884b0; font-style: italic; }
.place.street { fill: #5f5138; stroke: none; }
.place.water { fill: #7ba7cf; font-style: italic; stroke: none; }
.shield text { font-family: "Noto Sans", sans-serif; text-anchor: middle; fill: #5c4a38; font-weight: 600; }
.shield rect { fill: #f9ddc8; stroke: #d3a98a; stroke-width: 3; }
.shield.lime rect { fill: #eef2c8; stroke: #c0c890; }
.shield.plain rect { fill: #eee; stroke: #ccc; }
.zoom { position: absolute; left: 8px; top: 8px; border: 1px solid #b9b8b5; border-radius: 3px; overflow: hidden; }
.zoom button { width: 23px; height: 22px; background: #fff; color: #000; font: bold 18px/20px "Liberation Sans", sans-serif; }
.zoom button + button { border-top: 1px solid #ccc; }
.layers { position: absolute; left: 8px; top: 63px; width: 34px; height: 34px; background: #fff; border-radius: 4px; box-shadow: 0 0 2px #aaa; }
.layers svg { width: 24px; height: 24px; }
.attr { position: absolute; right: 0; bottom: 0; display: flex; align-items: center; gap: 3px; padding: 0 4px; height: 14px; background: rgba(255, 255, 255, .85); font: 9px "Liberation Sans", sans-serif; color: #333; white-space: nowrap; }
.attr svg { width: 9px; height: 6px; }
.attr a { color: #0078a8; text-decoration: none; }
.grid { display: grid; grid-template-columns: 1fr 1fr; column-gap: 12px; row-gap: 12px; margin-top: 16px; }
.grid.bank { margin-top: 7px; }
.field label { display: block; height: 22px; line-height: 20px; color: #444; font-size: 12px; }
.group { display: flex; height: 30px; border: 1px solid #e1e5ee; border-radius: 5px; overflow: hidden; }
.addon { width: 31px; flex: none; display: flex; justify-content: center; align-items: center; background: #f1f4ff; border-right: 1px solid #e1e5ee; }
.ic.sq { width: 12px; height: 12px; margin-bottom: 2px; }
input { flex: 1; min-width: 0; border: 0; outline: 0; padding: 0 9px; font: inherit; color: #444; background: #fff; }
.show { height: 24px; margin-top: 12px; padding: 0 6px; gap: 3px; border: 1px solid #0d6efd; border-radius: 3px; color: #0d6efd; font-size: 10px; }
.show .ic { width: 9px; height: 10px; }
hr { margin: 5px 0 0; border: 0; height: 1px; background: #c8c9ca; }
.scroll { width: 16px; flex: none; display: flex; flex-direction: column; align-items: center; background: #f1f1f1; }
.scroll svg { width: 12px; height: 16px; }
.thumb { flex: 319; width: 12px; background: #c1c1c1; }
.rest { flex: 118; }
.mfoot { height: 54px; flex: none; display: flex; justify-content: flex-end; align-items: center; gap: 6px; padding: 0 12px; border-top: 1px solid #dee2e6; }
.btn { height: 29px; padding: 0 9px; gap: 3px; border-radius: 5px; color: #fff; }
.btn .ic { width: 11px; }
.grey { background: #6c757d; }
.blue { background: #0d6efd; }

.taskbar { height: 38px; flex: none; display: flex; gap: 4px; border-top: 2px solid #48484a; background: linear-gradient(90deg, #0a0b0b 0, #0b1414 12%, #1d1210 18%, #090909 24%, #1c1718 42%, #151312 55%, #121516 64%, #291b18 71%, #131819 76%, #231613 79%, #0b1010 84%, #0b0b0b 100%); color: #fff; }
.app { width: 54px; height: 36px; border-radius: 3px; flex: none; }
.app.start { width: 52px; margin-right: -1px; }
.app svg { width: 30px; height: 30px; }
.app.start svg { width: 35px; height: 35px; }
.app.run { border: 1px solid #8d8d8d; background: linear-gradient(115deg, #929292 0, #565656 35%, #202020 70%, #393939 100%); }
.app.chrome.run { background: linear-gradient(115deg, #e3e3e3, #969696 60%, #bcbcbc); border-right: 4px double #ccc; }
.lang { align-self: center; font-size: 11px; margin-right: 10px; }
.tray { display: flex; align-items: center; gap: 6px; }
.tray svg { width: 16px; height: 16px; }
.clock { display: flex; flex-direction: column; justify-content: center; align-items: center; width: 64px; margin-left: 4px; font-size: 10px; line-height: 15px; }
.desktop { width: 13px; height: 36px; border: 1px solid #777; background: linear-gradient(135deg, #777, #151515 50%); }
</style>
